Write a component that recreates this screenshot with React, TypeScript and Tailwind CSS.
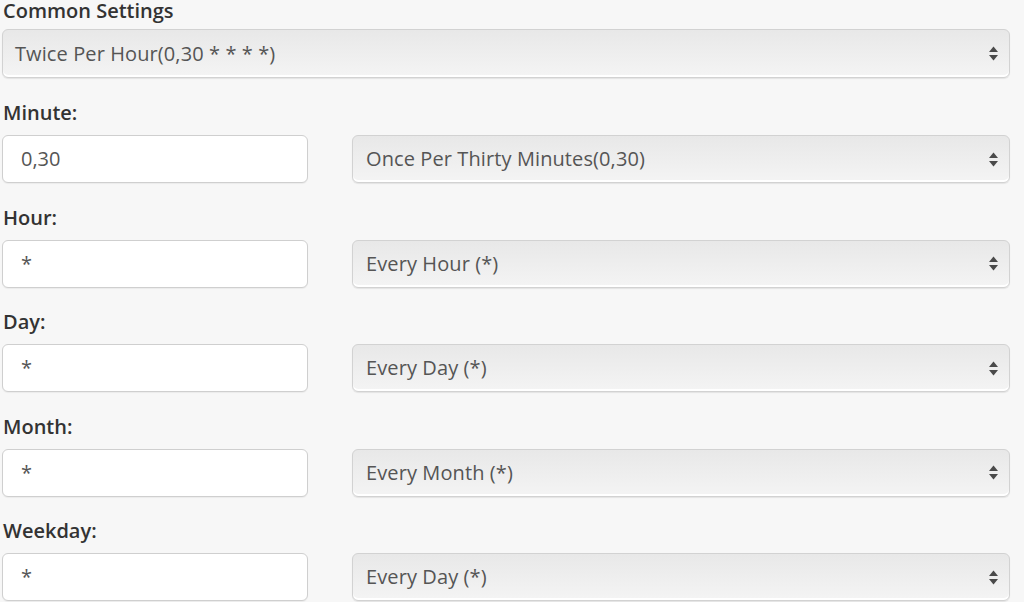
import React from 'react';

const fields = [
  { label: 'Minute:', value: '0,30', option: 'Once Per Thirty Minutes(0,30)' },
  { label: 'Hour:', value: '*', option: 'Every Hour (*)' },
  { label: 'Day:', value: '*', option: 'Every Day (*)' },
  { label: 'Month:', value: '*', option: 'Every Month (*)' },
  { label: 'Weekday:', value: '*', option: 'Every Day (*)' },
];

const Arrows = () => (
  <svg width="11" height="17" viewBox="0 0 11 17" className="shrink-0">
    <path d="M5.5 1.5 L10 7 H1 Z" fill="#4a4a4a" />
    <path d="M5.5 15.5 L10 10 H1 Z" fill="#4a4a4a" />
  </svg>
);

const FakeSelect: React.FC<{ text: string; className?: string; pad?: string }> = ({ text, className = '', pad = 'pl-[13px]' }) => (
  <div
    className={`flex items-center justify-between rounded-[6px] border border-[#d2d2d2] bg-gradient-to-b from-[#e8e8e8] to-[#f4f4f4] shadow-[inset_0_-2px_0_#ffffff,0_1px_1px_rgba(0,0,0,0.08)] pr-[10px] ${pad} ${className}`}
  >
    <span className="text-[20px] tracking-[0.1px] text-[#555555] leading-none">{text}</span>
    <Arrows />
  </div>
);

const App: React.FC = () => {
  return (
    <div
      className="w-[1024px] h-[602px] overflow-hidden bg-[#f7f7f7] pl-[2px]"
      style={{ fontFamily: '"Open Sans", "Liberation Sans", sans-serif' }}
    >
      <div className="w-[1008px] flex flex-col">
        {/* Common settings */}
        <div className="h-[22px] leading-[22px] text-[20px] font-semibold text-[#333333] pl-[1px]">Common Settings</div>
        <FakeSelect text="Twice Per Hour(0,30 * * * *)" pad="pl-[12px]" className="mt-[7px] h-[49px]" />

        <div className="mt-[24px] flex flex-col gap-[23.5px]">
          {fields.map((f) => (
            <div key={f.label} className="flex flex-col">
              <div className="h-[22px] leading-[22px] text-[20px] font-semibold text-[#333333] pl-[1px]">{f.label}</div>
              <div className="mt-[11px] flex gap-[44px]">
                <div className="w-[306px] h-[48px] shrink-0 rounded-[6px] border border-[#cfcfcf] bg-white flex items-center pl-[18px] shadow-[0_1px_1px_rgba(0,0,0,0.05)]">
                  <span className="text-[20px] text-[#555555] leading-none">{f.value}</span>
                </div>
                <FakeSelect text={f.option} className="flex-1 h-[48px]" />
              </div>
            </div>
          ))}
        </div>
      </div>
    </div>
  );
};

export default App;
